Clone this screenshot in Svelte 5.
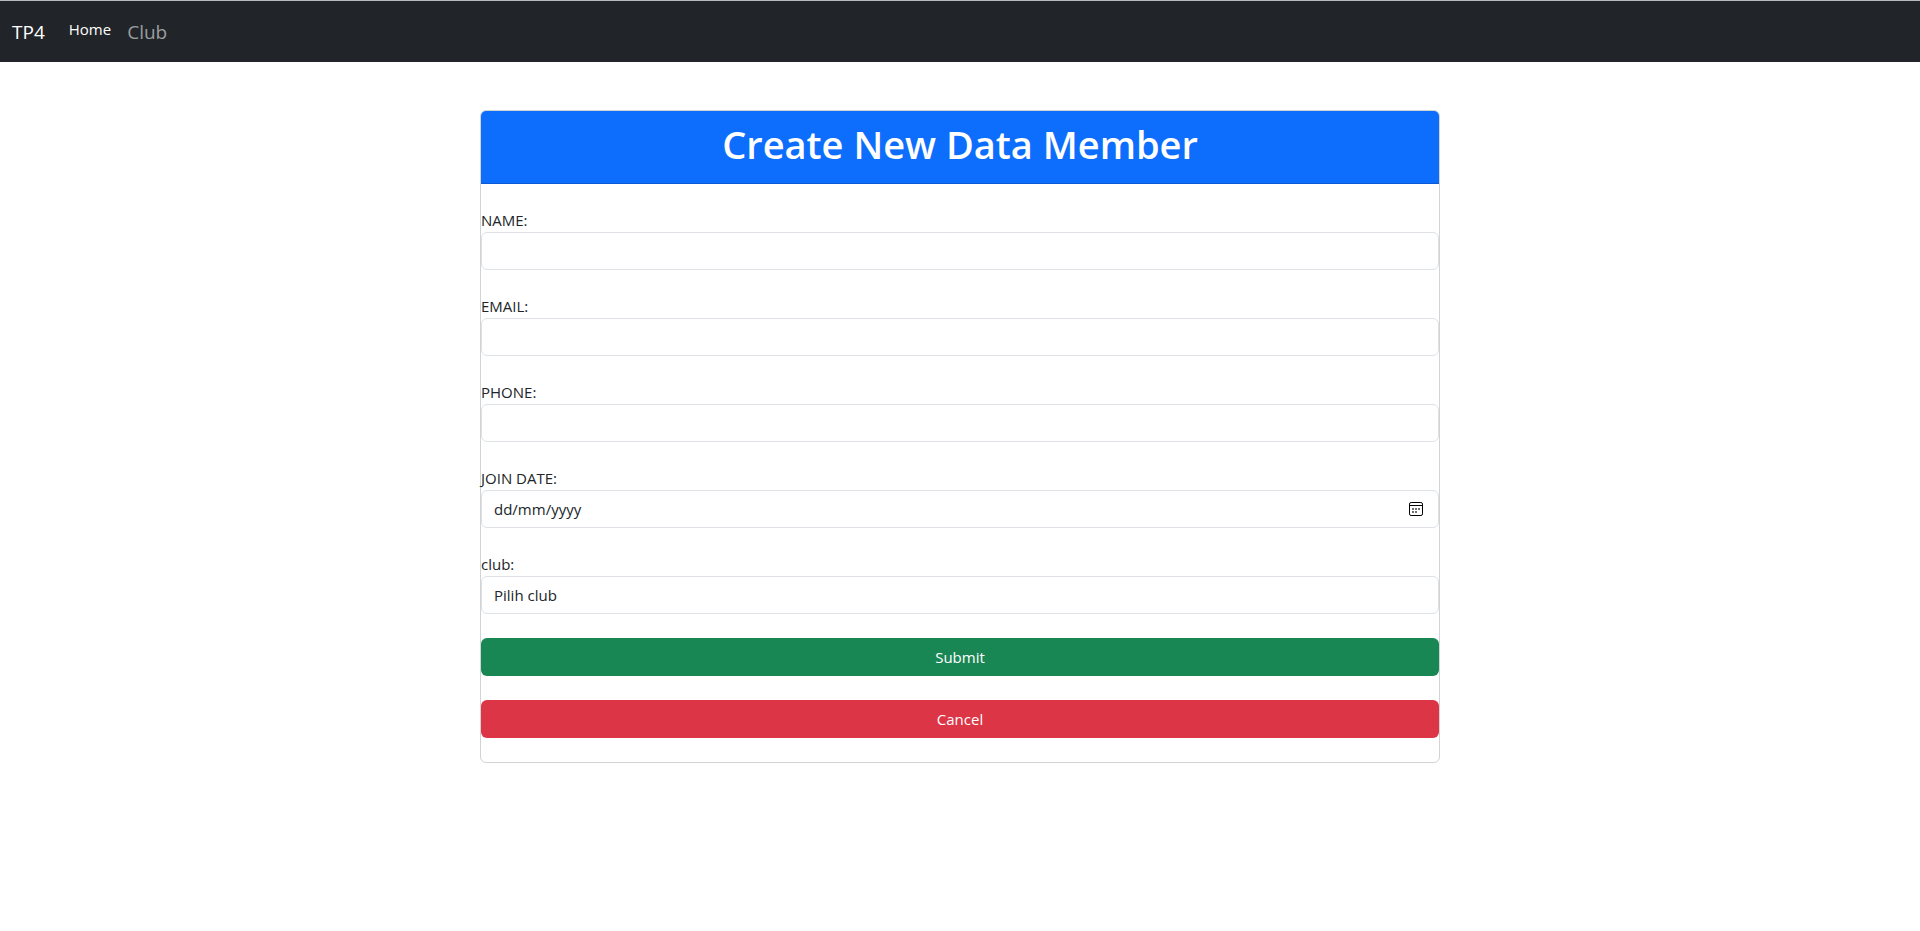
<script lang="ts">
  const fields = [
    { id: 'name', label: 'NAME:', type: 'text' },
    { id: 'email', label: 'EMAIL:', type: 'email' },
    { id: 'phone', label: 'PHONE:', type: 'tel' }
  ];
</script>

<nav class="navbar">
  <a class="brand" href="#top">TP4</a>
  <a class="link active" href="#home">Home</a>
  <a class="link club" href="#club">Club</a>
</nav>

<main>
  <form class="card">
    <header><h1>Create New Data Member</h1></header>

    {#each fields as field}
      <div class="field">
        <label for={field.id}>{field.label}</label>
        <input class="control" id={field.id} name={field.id} type={field.type} />
      </div>
    {/each}

    <div class="field">
      <label for="join">JOIN DATE:</label>
      <div class="control date">
        <input id="join" name="join" type="text" placeholder="dd/mm/yyyy" />
        <button class="picker" type="button" aria-label="Show date picker">
          <svg viewBox="0 0 14 14" width="14" height="14">
            <rect x="0.5" y="0.5" width="13" height="13" rx="1.6" fill="none" stroke="#000" />
            <path d="M1 3.5H13" stroke="#000" />
            <path d="M3.2 6.2h1.6v1.6H3.2zM6.2 6.2h1.6v1.6H6.2zM9.2 6.2h1.6v1.6H9.2zM3.2 9.2h1.6v1.6H3.2zM6.2 9.2h1.6v1.6H6.2z" fill="#111" />
          </svg>
        </button>
      </div>
    </div>

    <div class="field">
      <label for="club">club:</label>
      <select class="control" id="club" name="club">
        <option>Pilih club</option>
      </select>
    </div>

    <button class="btn submit" type="button">Submit</button>
    <button class="btn cancel" type="button">Cancel</button>
  </form>
</main>

<style>
  :global(body) {
    margin: 0;
    background: #fff;
    color: #212529;
    font-family: "Segoe UI", "Open Sans", "Noto Sans", sans-serif;
    font-size: 15px;
    line-height: 24px;
  }

  * {
    box-sizing: border-box;
  }

  .navbar {
    display: flex;
    align-items: center;
    min-height: 62px;
    padding: 0 12px;
    border-top: 1px solid #b9bcbe;
    background: #212529;
  }

  .navbar a {
    text-decoration: none;
  }

  .brand {
    margin-right: 24px;
    color: #fff;
    font-size: 19px;
    line-height: 30px;
  }

  .link {
    margin-right: 16px;
    color: #fff;
  }

  .active {
    padding-bottom: 6px;
  }

  .club {
    color: #9b9d9f;
    font-size: 19px;
    line-height: 30px;
  }

  .card {
    display: flex;
    flex-direction: column;
    gap: 24px;
    width: 50%;
    margin: 48px auto 0;
    padding-bottom: 24px;
    border: 1px solid #d2d3d4;
    border-radius: 6px;
  }

  header {
    padding: 8px 16px 14px;
    border-bottom: 1px solid #0b5bd3;
    border-radius: 5px 5px 0 0;
    background: #0d6efd;
  }

  h1 {
    margin: 0;
    color: #fff;
    font-size: 38px;
    font-weight: 600;
    line-height: 50px;
    text-align: center;
  }

  .field {
    display: flex;
    flex-direction: column;
  }

  .control {
    width: 100%;
    height: 38px;
    margin: 0;
    padding: 6px 12px;
    border: 1px solid #dee2e6;
    border-radius: 6px;
    background: #fff;
    color: #212529;
    font: inherit;
    appearance: none;
  }

  .date {
    display: flex;
    align-items: center;
    padding-right: 15px;
  }

  .date input {
    flex: 1;
    min-width: 0;
    padding: 0;
    border: 0;
    outline: 0;
    background: transparent;
    color: inherit;
    font: inherit;
  }

  .date input::placeholder {
    color: #212529;
    opacity: 1;
  }

  .picker {
    display: flex;
    padding: 0;
    border: 0;
    background: none;
  }

  .btn {
    height: 38px;
    padding: 6px 12px;
    border: 0;
    border-radius: 6px;
    color: #fff;
    font: inherit;
    cursor: pointer;
  }

  .submit {
    background: #198754;
  }

  .cancel {
    background: #dc3545;
  }
</style>
